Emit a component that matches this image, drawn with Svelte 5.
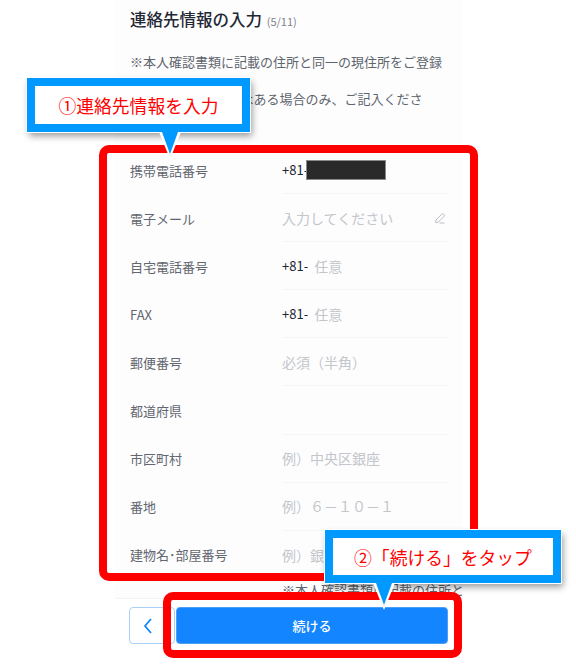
<script lang="ts">
	// 連絡先フォームの行
	type Fila = { etiqueta: string; prefijo?: string; valor?: string; redactado?: boolean; editar?: boolean };

	const filas: Fila[] = [
		{ etiqueta: '携帯電話番号', prefijo: '+81-', redactado: true },
		{ etiqueta: '電子メール', valor: '入力してください', editar: true },
		{ etiqueta: '自宅電話番号', prefijo: '+81-', valor: '任意' },
		{ etiqueta: 'FAX', prefijo: '+81-', valor: '任意' },
		{ etiqueta: '郵便番号', valor: '必須（半角）' },
		{ etiqueta: '都道府県' },
		{ etiqueta: '市区町村', valor: '例）中央区銀座' },
		{ etiqueta: '番地', valor: '例）６－１０－１' },
		{ etiqueta: '建物名･部屋番号', valor: '例）銀座ビル１０１号室' }
	];
</script>

<div class="pantalla">
	<div class="telefono">
		<h1>連絡先情報の入力 <small>(5/11)</small></h1>
		<p class="nota primera">※本人確認書類に記載の住所と同一の現住所をご登録</p>
		<p class="nota">※建物名･部屋番号はある場合のみ、ご記入くださ</p>

		<div class="formulario">
			{#each filas as f (f.etiqueta)}
				<div class="fila">
					<span class="etiqueta">{f.etiqueta}</span>
					<div class="campo">
						{#if f.prefijo}<span class="prefijo">{f.prefijo}</span>{/if}
						{#if f.redactado}<span class="redactado"></span>{/if}
						{#if f.valor}<span class="placeholder">{f.valor}</span>{/if}
						{#if f.editar}
							<svg class="lapiz" viewBox="0 0 12 12" width="12" height="12" aria-hidden="true">
								<path d="M1.5 10.5 L2 8 L8 2 Q8.8 1.3 9.6 2 L10.2 2.6 Q10.8 3.4 10.2 4.2 L4.2 10.2 Z M5.5 11 H10.5" fill="none" stroke="#b4b8bd" stroke-width="0.9" />
							</svg>
						{/if}
					</div>
				</div>
			{/each}
			<p class="pie">※本人確認書類に記載の住所と</p>
		</div>

		<div class="barra">
			<button class="volver" aria-label="戻る">
				<svg viewBox="0 0 12 16" width="12" height="16" aria-hidden="true">
					<path d="M9 1 L3 8 L9 15" fill="none" stroke="#1285ff" stroke-width="1.8" />
				</svg>
			</button>
			<button class="continuar">続ける</button>
		</div>
	</div>

	<!-- anotaciones sobre la captura -->
	<div class="marco marco-form"></div>
	<div class="marco marco-boton"></div>

	<div class="globo globo-uno">①連絡先情報を入力</div>
	<div class="globo globo-dos">②「続ける」をタップ</div>
</div>

<style>
	:global(body) {
		background: #fff;
	}

	.pantalla {
		position: relative;
		width: 576px;
		height: 665px;
		overflow: hidden;
		background: #fff;
		font-family: 'Noto Sans CJK JP', 'Noto Sans', sans-serif;
	}

	.telefono {
		display: flex;
		flex-direction: column;
		width: 348px;
		height: 665px;
		margin-left: 115px;
		background: #fdfdfe;
		overflow: hidden;
	}

	h1 {
		margin: 8px 0 0 15px;
		font-size: 16.5px;
		line-height: 22px;
		font-weight: 500;
		color: #1f2733;
	}

	h1 small {
		margin-left: 1px;
		font-size: 11px;
		font-weight: 400;
		color: #7d838b;
	}

	.nota {
		margin: 17px 0 0 15px;
		font-size: 13px;
		line-height: 20px;
		color: #5f656d;
		white-space: nowrap;
	}

	.primera {
		margin-top: 20px;
	}

	.formulario {
		margin-top: 37px;
		flex: 1;
		min-height: 0;
		overflow: hidden;
	}

	.fila {
		display: flex;
		align-items: center;
		height: 48.1px;
		padding-left: 15px;
	}

	.etiqueta {
		width: 152px;
		flex: none;
		font-size: 13px;
		color: #62676f;
	}

	.campo {
		display: flex;
		align-items: center;
		width: 165px;
		height: 100%;
		gap: 5px;
		border-bottom: 1px solid #f4f5f6;
		font-size: 14px;
		white-space: nowrap;
		box-sizing: border-box;
	}

	.fila:last-of-type .campo {
		border-bottom: none;
	}

	.prefijo {
		color: #1f2733;
		font-size: 13px;
		margin-right: 1px;
	}

	.redactado {
		width: 80px;
		height: 20px;
		margin-left: -8px;
		background: #2a2a2a;
		border: 1px solid #8a8a8a;
		box-sizing: border-box;
	}

	.placeholder {
		color: #c3c6ca;
	}

	.lapiz {
		margin-left: auto;
		margin-right: 1px;
	}

	.pie {
		margin: 2px 0 0 167px;
		font-size: 13px;
		line-height: 18px;
		color: #5f656d;
		white-space: nowrap;
	}

	.barra {
		display: flex;
		flex: none;
		gap: 1px;
		height: 67px;
		padding: 8px 15px 0 14px;
		background: #fff;
		border-top: 1px solid #f2f3f5;
		box-sizing: border-box;
	}

	button {
		height: 37px;
		border-radius: 4px;
		font-family: inherit;
		padding: 0;
	}

	.volver {
		width: 46px;
		display: flex;
		align-items: center;
		padding-left: 12px;
		background: #fff;
		border: 1px solid #a9d0f8;
	}

	.continuar {
		flex: 1;
		background: #1285ff;
		border: 1px solid #4aa0f5;
		color: #fff;
		font-size: 13px;
		font-weight: 500;
	}

	.marco {
		position: absolute;
		border: 8px solid #ff0000;
		box-sizing: border-box;
		border-radius: 10px;
	}

	.marco-form {
		left: 99px;
		top: 145px;
		width: 379px;
		height: 436px;
	}

	.marco-boton {
		left: 163px;
		top: 592px;
		width: 299px;
		height: 66px;
	}

	.globo {
		position: absolute;
		display: flex;
		align-items: center;
		justify-content: center;
		box-sizing: border-box;
		height: 54px;
		background: #fff;
		border: 8px solid #0099ff;
		outline: 1px solid #fff;
		box-shadow: 2px 4px 7px rgba(0, 0, 0, 0.4);
		color: #ff0000;
		font-size: 17.8px;
		white-space: nowrap;
	}

	/* la cola del globo: triángulo blanco debajo del azul */
	.globo::before,
	.globo::after {
		content: '';
		position: absolute;
		top: 100%;
		width: 0;
		height: 0;
		margin-top: 8px;
		border-style: solid;
		border-color: transparent;
		border-bottom-width: 0;
	}

	.globo::before {
		border-left-width: 11px;
		border-right-width: 11px;
		border-top-width: 27px;
		border-top-color: #fff;
	}

	.globo::after {
		border-left-width: 8px;
		border-right-width: 8px;
		border-top-width: 22px;
		border-top-color: #0099ff;
	}

	.globo-uno {
		left: 27px;
		top: 78px;
		width: 223px;
	}

	.globo-uno::before {
		left: 124px;
	}

	.globo-uno::after {
		left: 127px;
	}

	.globo-dos {
		left: 325px;
		top: 530px;
		width: 236px;
		height: 53px;
	}

	.globo-dos::before {
		left: 40px;
	}

	.globo-dos::after {
		left: 43px;
	}
</style>
